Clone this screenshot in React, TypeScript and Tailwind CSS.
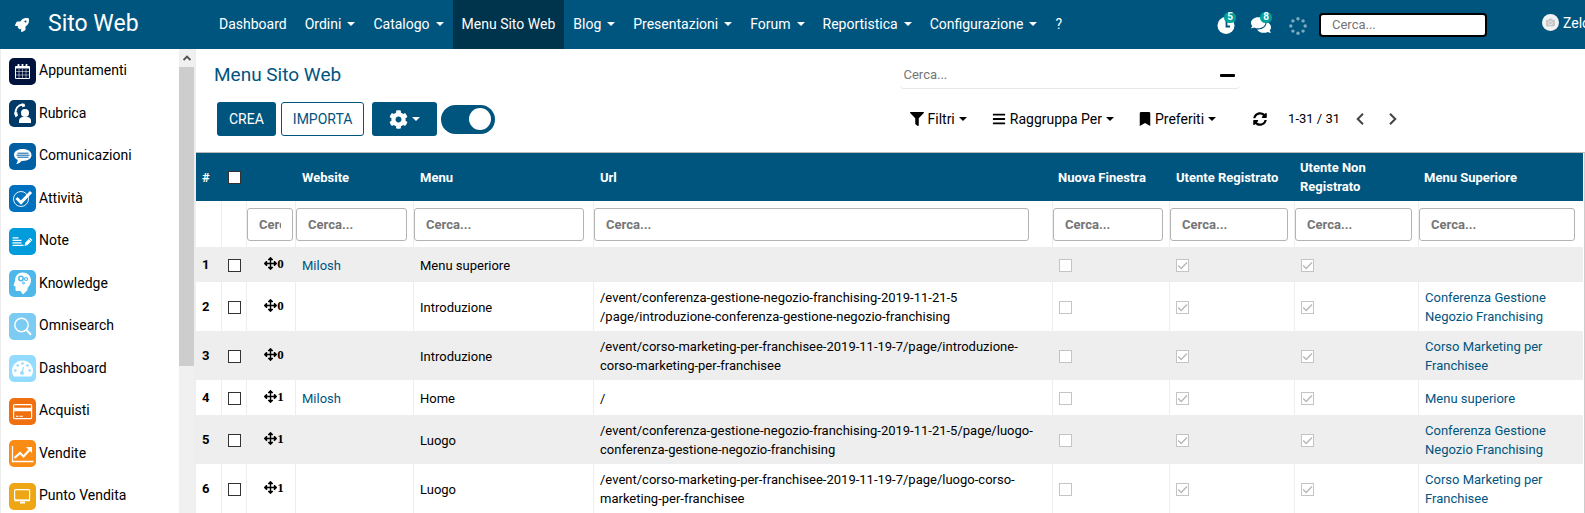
import React from "react";
import type { ReactNode } from "react";
import {
  FaRocket,
  FaComments,
  FaCog,
  FaFilter,
  FaBars,
  FaBookmark,
  FaSyncAlt,
  FaArrowsAlt,
  FaCamera,
} from "react-icons/fa";

const navItems = [
  { label: "Dashboard" },
  { label: "Ordini", menu: true },
  { label: "Catalogo", menu: true },
  { label: "Menu Sito Web", active: true },
  { label: "Blog", menu: true },
  { label: "Presentazioni", menu: true },
  { label: "Forum", menu: true },
  { label: "Reportistica", menu: true },
  { label: "Configurazione", menu: true },
  { label: "?" },
];

function Glyph({ children }: { children: ReactNode }) {
  return (
    <svg viewBox="0 0 27 27" className="size-[27px]" fill="none" stroke="white" aria-hidden="true">
      {children}
    </svg>
  );
}

const apps: { label: string; tile: string; glyph: ReactNode }[] = [
  {
    label: "Appuntamenti",
    tile: "bg-[#00133d]",
    glyph: (
      <Glyph>
        <path d="M6.5 8.5h14v12h-14z" strokeWidth="1" />
        <path d="M6.5 9.5h14" strokeWidth="2" />
        <path d="M9.5 6v4M13.5 6v3M17.5 6v4" strokeWidth="1.8" />
        <path d="M6.5 13.5h14M6.5 17h14M10 11v9.500M13.500 11v9.500M17 11v9.500" strokeWidth="0.5" />
      </Glyph>
    ),
  },
  {
    label: "Rubrica",
    tile: "bg-[#003a69]",
    glyph: (
      <Glyph>
        <path d="M14 4.500C9 5 6 9 6.500 14.500" strokeWidth="2.200" />
        <path d="M12.500 3.500l3 .2.8 2.500-3 1zM5 12.500l3.200-.3.800 3.500-2.500 1.500z" fill="white" stroke="none" />
        <circle cx="16" cy="13" r="4" fill="white" stroke="none" />
        <path d="M10 23v-2c0-2.500 2-4 4-4h4c2.500 0 4 1.500 4 4v2z" fill="white" stroke="none" />
      </Glyph>
    ),
  },
  {
    label: "Comunicazioni",
    tile: "bg-[#0060a3]",
    glyph: (
      <Glyph>
        <path d="M13.500 6C8.500 6 5 8.500 5 12c0 2.200 1.500 4 3.700 5 0 1.500-.7 3-1.700 4 2.500-.4 4.500-1.500 5.500-3.100C18.500 18.200 22.500 15.700 22.500 12S18.500 6 13.500 6z" fill="white" stroke="none" />
        <path d="M8.500 10.200h11M7.500 12.200h13M8.500 14.200h11" stroke="#0060a3" strokeWidth="1" />
      </Glyph>
    ),
  },
  {
    label: "Attività",
    tile: "bg-[#0071bf]",
    glyph: (
      <Glyph>
        <circle cx="12" cy="14" r="7.500" strokeWidth="0.900" />
        <path d="M7.500 13l4.500 4.500L22 7" strokeWidth="3" />
      </Glyph>
    ),
  },
  {
    label: "Note",
    tile: "bg-[#009cdc]",
    glyph: (
      <Glyph>
        <path d="M3.500 9.800h6M3.500 12.300h9M3.500 14.800h9M3.500 17.300h11" strokeWidth="1.300" />
        <path d="M15.500 18l.7-3.300 4.800-4.900 2.400 2.300-4.800 4.900z" fill="white" stroke="none" />
        <path d="M19.500 10.500l3 3" stroke="#009cdc" strokeWidth="0.700" />
      </Glyph>
    ),
  },
  {
    label: "Knowledge",
    tile: "bg-[#4fb8ea]",
    glyph: (
      <Glyph>
        <path d="M13.500 2.500C18.500 2.500 22 6 22 10.500c0 3-1.500 5-3.500 7.500v2L14 24.500 11.500 21H7.800c-.8 0-1.300-.5-1.300-1.500v-3L4.500 15.500 6 11c0-5 3-8.500 7.500-8.500z" fill="white" stroke="none" />
        <circle cx="12" cy="8.500" r="2.200" stroke="#4fb8ea" strokeWidth="1.500" />
        <circle cx="17" cy="9" r="1.500" stroke="#4fb8ea" strokeWidth="1.200" />
        <circle cx="14.500" cy="13" r="1" stroke="#4fb8ea" strokeWidth="1" />
      </Glyph>
    ),
  },
  {
    label: "Omnisearch",
    tile: "bg-[#7bcbf2]",
    glyph: (
      <Glyph>
        <circle cx="12.500" cy="12" r="6.700" strokeWidth="1.400" />
        <path d="M17.500 17l4 4.300" strokeWidth="2" strokeLinecap="round" />
      </Glyph>
    ),
  },
  {
    label: "Dashboard",
    tile: "bg-[#94dcff]",
    glyph: (
      <Glyph>
        <path d="M5 21.500c-1.200-1.600-2-3.500-2-5.500C3 10 7.700 5.500 13.500 5.500S24 10 24 16c0 2-.8 3.900-2 5.500z" fill="white" stroke="none" />
        <g fill="#94dcff" stroke="none">
          <circle cx="13.500" cy="8.500" r="1.300" />
          <circle cx="8.700" cy="10.500" r="1.300" />
          <circle cx="18.500" cy="10.500" r="1.300" />
          <circle cx="6.300" cy="15.500" r="1.300" />
          <circle cx="20.700" cy="15.500" r="1.300" />
          <circle cx="13" cy="18" r="1.900" />
        </g>
        <path d="M13.200 18l1.300-6" stroke="#94dcff" strokeWidth="1.200" />
      </Glyph>
    ),
  },
  {
    label: "Acquisti",
    tile: "bg-[#f07010]",
    glyph: (
      <Glyph>
        <rect x="4.600" y="6.600" width="18" height="14" rx="1" strokeWidth="1.200" />
        <path d="M5 11.500h17.500" strokeWidth="3.600" />
        <path d="M7 18.300h2.500M10.500 18.300h3.500" strokeWidth="1" />
      </Glyph>
    ),
  },
  {
    label: "Vendite",
    tile: "bg-[#fa8c16]",
    glyph: (
      <Glyph>
        <path d="M3.500 6v15.500h21" strokeWidth="1.300" />
        <path d="M5.500 18l5.500-5 3.500 3.500 6-6.500" strokeWidth="2.200" />
        <path d="M17 7h6v6z" fill="white" stroke="none" />
      </Glyph>
    ),
  },
  {
    label: "Punto Vendita",
    tile: "bg-[#efa614]",
    glyph: (
      <Glyph>
        <rect x="5.600" y="6.600" width="15" height="10.500" rx="1" strokeWidth="1.200" />
        <path d="M5.500 17.500h15.500" strokeWidth="1.600" />
        <path d="M11 18.500h5v2h-5z" fill="white" stroke="none" />
      </Glyph>
    ),
  },
];

const conferenza = "Conferenza Gestione Negozio Franchising";
const corso = "Corso Marketing per Franchisee";

const rows = [
  { seq: 0, site: "Milosh", menu: "Menu superiore", url: [], parent: "" },
  {
    seq: 0,
    site: "",
    menu: "Introduzione",
    url: ["/event/conferenza-gestione-negozio-franchising-2019-11-21-5", "/page/introduzione-conferenza-gestione-negozio-franchising"],
    parent: conferenza,
  },
  {
    seq: 0,
    site: "",
    menu: "Introduzione",
    url: ["/event/corso-marketing-per-franchisee-2019-11-19-7/page/introduzione-", "corso-marketing-per-franchisee"],
    parent: corso,
  },
  { seq: 1, site: "Milosh", menu: "Home", url: ["/"], parent: "Menu superiore" },
  {
    seq: 1,
    site: "",
    menu: "Luogo",
    url: ["/event/conferenza-gestione-negozio-franchising-2019-11-21-5/page/luogo-", "conferenza-gestione-negozio-franchising"],
    parent: conferenza,
  },
  {
    seq: 1,
    site: "",
    menu: "Luogo",
    url: ["/event/corso-marketing-per-franchisee-2019-11-19-7/page/luogo-corso-", "marketing-per-franchisee"],
    parent: corso,
  },
];

const filterNames = ["Sequenza", "Website", "Menu", "Url", "Nuova Finestra", "Utente Registrato", "Utente Non Registrato", "Menu Superiore"];

function Caret() {
  return (
    <svg viewBox="0 0 8 4" className="h-1 w-2 shrink-0" fill="currentColor" aria-hidden="true">
      <path d="M0 0h8L4 4z" />
    </svg>
  );
}

function SelectBox({ label }: { label: string }) {
  return (
    <input
      type="checkbox"
      aria-label={label}
      className="block size-[13px] appearance-none border border-[#333] bg-white"
    />
  );
}

function Flag({ label, on }: { label: string; on?: boolean }) {
  return (
    <span className="grid w-[13px]">
      <input
        type="checkbox"
        aria-label={label}
        checked={!!on}
        disabled
        readOnly
        className="col-start-1 row-start-1 block size-[13px] appearance-none border border-[#c4c4c4] bg-white"
      />
      {on && (
        <svg viewBox="0 0 13 13" className="col-start-1 row-start-1 size-[13px]" fill="none" stroke="#b8b8b8" strokeWidth="1.400" aria-hidden="true">
          <path d="M2.200 6.500l3 3L11 3.500" />
        </svg>
      )}
    </span>
  );
}

function Counter({ children, value, label }: { children: ReactNode; value: number; label: string }) {
  return (
    <button aria-label={label} className="relative flex h-[18px] items-center text-white">
      {children}
      <span className="absolute -top-1 -right-px flex h-[11px] w-3 items-center justify-center rounded-full bg-[#00a09d] text-[10px] leading-none font-bold">
        {value}
      </span>
    </button>
  );
}

export default function App() {
  return (
    <div className="flex h-screen flex-col overflow-hidden bg-white font-[Roboto,sans-serif] text-sm text-black">
      <header className="flex h-[49px] shrink-0 items-stretch overflow-hidden bg-[#00557f] text-white">
        <a href="#" className="flex w-[210px] shrink-0 items-center gap-[19px] pl-[15px]">
          <FaRocket className="size-[14px]" />
          <span className="text-[23px]">Sito Web</span>
        </a>
        <nav className="flex shrink-0">
          {navItems.map((item) => (
            <a
              key={item.label}
              href="#"
              className={`flex items-center gap-1.5 px-[9px] pb-0.5 whitespace-nowrap ${item.active ? "bg-[#00334c]" : ""}`}
            >
              {item.label}
              {item.menu && <Caret />}
            </a>
          ))}
        </nav>
        <div className="ml-auto flex shrink-0 items-center">
          <Counter label="Attività" value={5}>
            <svg viewBox="0 0 18 18" className="size-[18px]" aria-hidden="true">
              <circle cx="9" cy="9.500" r="8.500" fill="white" />
              <path d="M9.500 4.500v6h3.500" fill="none" stroke="#00557f" strokeWidth="1.800" />
            </svg>
          </Counter>
          <div className="ml-4">
            <Counter label="Messaggi" value={8}>
              <FaComments className="size-5" />
            </Counter>
          </div>
          <svg viewBox="0 0 18 18" className="mt-[2px] ml-[18px] size-[18px]" fill="#7faabf" aria-hidden="true">
            <circle cx="9" cy="1.800" r="1.700" />
            <circle cx="14.100" cy="3.900" r="1.700" />
            <circle cx="16.200" cy="9" r="1.700" />
            <circle cx="14.100" cy="14.100" r="1.700" />
            <circle cx="9" cy="16.200" r="1.700" />
            <circle cx="3.900" cy="14.100" r="1.700" />
            <circle cx="1.800" cy="9" r="1.700" />
            <circle cx="3.900" cy="3.900" r="1.700" />
          </svg>
          <input
            type="text"
            aria-label="Cerca nel menu"
            placeholder="Cerca..."
            className="ml-3 h-6 w-[168px] rounded border-2 border-black bg-white px-[11px] text-[13px] text-black outline-none placeholder:text-[#757575]"
          />
          <button className="mb-1 ml-[55px] flex w-[43px] items-center gap-1 overflow-hidden whitespace-nowrap">
            <span className="flex size-[17px] shrink-0 items-center justify-center rounded-full bg-[#f2f2f2]">
              <FaCamera className="size-[9px] text-[#c8c8c8]" />
            </span>
            Zelo
          </button>
        </div>
      </header>

      <div className="flex min-h-0 flex-1">
        <aside className="flex w-[196px] shrink-0 overflow-hidden border-r-2 border-l border-r-[#eee] border-l-[#eee]">
          <ul className="flex-1 pt-px">
            {apps.map((app) => (
              <li key={app.label} className="odd:h-[42px] even:h-[43px]">
                <a href="#" className="flex h-full items-center gap-[3px] pl-2">
                  <span className={`shrink-0 overflow-hidden rounded-[5px] ${app.tile}`}>{app.glyph}</span>
                  <span className="pb-0.5">{app.label}</span>
                </a>
              </li>
            ))}
          </ul>
          <div className="flex w-[15px] flex-col bg-[#f0f0f0]">
            <div className="flex h-[18px] shrink-0 items-center justify-center">
              <svg viewBox="0 0 8 6" className="h-1.5 w-2" fill="none" stroke="#505050" strokeWidth="1.800" aria-hidden="true">
                <path d="M.6 5L4 1.600 7.400 5" />
              </svg>
            </div>
            <div className="h-[299px] shrink-0 bg-[#cdcdcd]" />
          </div>
        </aside>

        <main className="flex min-w-0 flex-1 flex-col">
          <div className="grid shrink-0 grid-cols-2">
            <h1 className="flex h-11 items-center pt-2 pl-[18px] text-[19px] text-[#00557f]">Menu Sito Web</h1>
            <div className="pt-2 pl-[9px]">
              <div className="flex h-8 w-[340px] items-center rounded-b border-b border-[#e8e8e8] pt-1.5 pr-[5px] pl-1">
                <input
                  type="text"
                  aria-label="Cerca"
                  placeholder="Cerca..."
                  className="min-w-0 flex-1 text-[13px] outline-none placeholder:text-[#757575]"
                />
                <button aria-label="Riduci ricerca" className="flex h-4 w-[15px] items-center">
                  <span className="h-[3px] w-full rounded-[1px] bg-black" />
                </button>
              </div>
            </div>
            <div className="flex items-center pt-[9px] pb-4 pl-[21px]">
              <button className="h-[34px] rounded-[3px] bg-[#00557f] px-3 text-white">CREA</button>
              <button className="ml-[5px] h-[34px] rounded-[3px] border border-[#00557f] px-[11px] text-[#00557f]">IMPORTA</button>
              <button aria-label="Azioni" className="ml-2 flex h-[34px] w-[65px] items-center justify-center gap-1 rounded-[3px] bg-[#00557f] text-white">
                <FaCog className="size-[19px]" />
                <Caret />
              </button>
              <button
                role="switch"
                aria-checked="true"
                aria-label="Modalità"
                className="ml-1 flex h-[29px] w-[54px] items-center justify-end rounded-full bg-[#00557f] pr-1"
              >
                <span className="size-[22px] rounded-full bg-white" />
              </button>
            </div>
            <div className="flex items-center pt-[9px] pb-4 pl-[19px] whitespace-nowrap">
              <button className="flex items-center gap-1">
                <FaFilter className="size-[14px]" />
                Filtri
                <Caret />
              </button>
              <button className="ml-[25px] flex items-center gap-1">
                <FaBars className="size-[14px]" />
                Raggruppa Per
                <Caret />
              </button>
              <button className="ml-[25px] flex items-center gap-1">
                <FaBookmark className="h-[14px] w-3" />
                Preferiti
                <Caret />
              </button>
              <button aria-label="Aggiorna" className="ml-[37px]">
                <FaSyncAlt className="size-[14px]" />
              </button>
              <span className="ml-[21px] text-[13px]">1-31 / 31</span>
              <button aria-label="Precedente" className="ml-4">
                <svg viewBox="0 0 8 12" className="h-3 w-2" fill="none" stroke="#444" strokeWidth="2" aria-hidden="true">
                  <path d="M7 .7L1.700 6 7 11.300" />
                </svg>
              </button>
              <button aria-label="Successivo" className="ml-[25px]">
                <svg viewBox="0 0 8 12" className="h-3 w-2" fill="none" stroke="#444" strokeWidth="2" aria-hidden="true">
                  <path d="M1 .7L6.300 6 1 11.300" />
                </svg>
              </button>
            </div>
          </div>

          <div className="min-h-0 flex-1 overflow-hidden border-t border-r border-t-[#bbb] border-r-[#ccc] pr-px">
            <table className="w-full table-fixed border-separate border-spacing-0 text-[13px] leading-[19px]">
              <colgroup>
                <col className="w-[25px]" />
                <col className="w-[25px]" />
                <col className="w-[49px]" />
                <col className="w-[118px]" />
                <col className="w-[180px]" />
                <col />
                <col className="w-[117px]" />
                <col className="w-[125px]" />
                <col className="w-[124px]" />
                <col className="w-[165px]" />
              </colgroup>
              <thead>
                <tr className="h-12 bg-[#00557f] text-left text-white">
                  <th className="pl-1.5">#</th>
                  <th className="pl-[7px]">
                    <SelectBox label="Seleziona tutto" />
                  </th>
                  <th />
                  <th className="pl-[7px]">Website</th>
                  <th className="pl-[7px]">Menu</th>
                  <th className="pl-[7px]">Url</th>
                  <th className="pl-1.5">Nuova Finestra</th>
                  <th className="pl-[7px]">Utente Registrato</th>
                  <th className="pr-4 pl-1.5">Utente Non Registrato</th>
                  <th className="pl-1.5">Menu Superiore</th>
                </tr>
                <tr className="h-[46px]">
                  <td />
                  <td className="border-l border-[#eee]" />
                  {filterNames.map((name) => (
                    <td key={name} className="border-l border-[#eee]">
                      <input
                        type="text"
                        aria-label={`Filtra ${name}`}
                        placeholder="Cerca..."
                        className="block h-[33px] w-[95%] rounded-[3px] border border-[#b4b4b4] bg-white px-[11px] font-bold outline-none placeholder:text-[#757575]"
                      />
                    </td>
                  ))}
                </tr>
              </thead>
              <tbody>
                {rows.map((row, i) => (
                  <tr key={i} className="odd:bg-[#eee] [&>td]:border-l [&>td]:border-[#eee] [&>td]:pt-1.5 [&>td]:pb-[5px] [&>td]:pl-1.5">
                    <th className="h-[35px] pl-1.5 text-left">{i + 1}</th>
                    <td>
                      <SelectBox label={`Seleziona riga ${i + 1}`} />
                    </td>
                    <td>
                      <span className="flex items-center justify-center pb-1 font-['Liberation_Serif',serif] text-[13px] leading-none font-bold">
                        <FaArrowsAlt className="size-[13px]" />
                        {row.seq}
                      </span>
                    </td>
                    <td>
                      {row.site && (
                        <a href="#" className="text-[#00557f]">
                          {row.site}
                        </a>
                      )}
                    </td>
                    <td>{row.menu}</td>
                    <td>
                      {row.url.map((line) => (
                        <span key={line} className="block whitespace-nowrap">
                          {line}
                        </span>
                      ))}
                    </td>
                    <td>
                      <Flag label="Nuova Finestra" />
                    </td>
                    <td>
                      <Flag label="Utente Registrato" on />
                    </td>
                    <td>
                      <Flag label="Utente Non Registrato" on />
                    </td>
                    <td className="pr-4">
                      {row.parent && (
                        <a href="#" className="text-[#00557f]">
                          {row.parent}
                        </a>
                      )}
                    </td>
                  </tr>
                ))}
              </tbody>
            </table>
          </div>
        </main>
      </div>
    </div>
  );
}
